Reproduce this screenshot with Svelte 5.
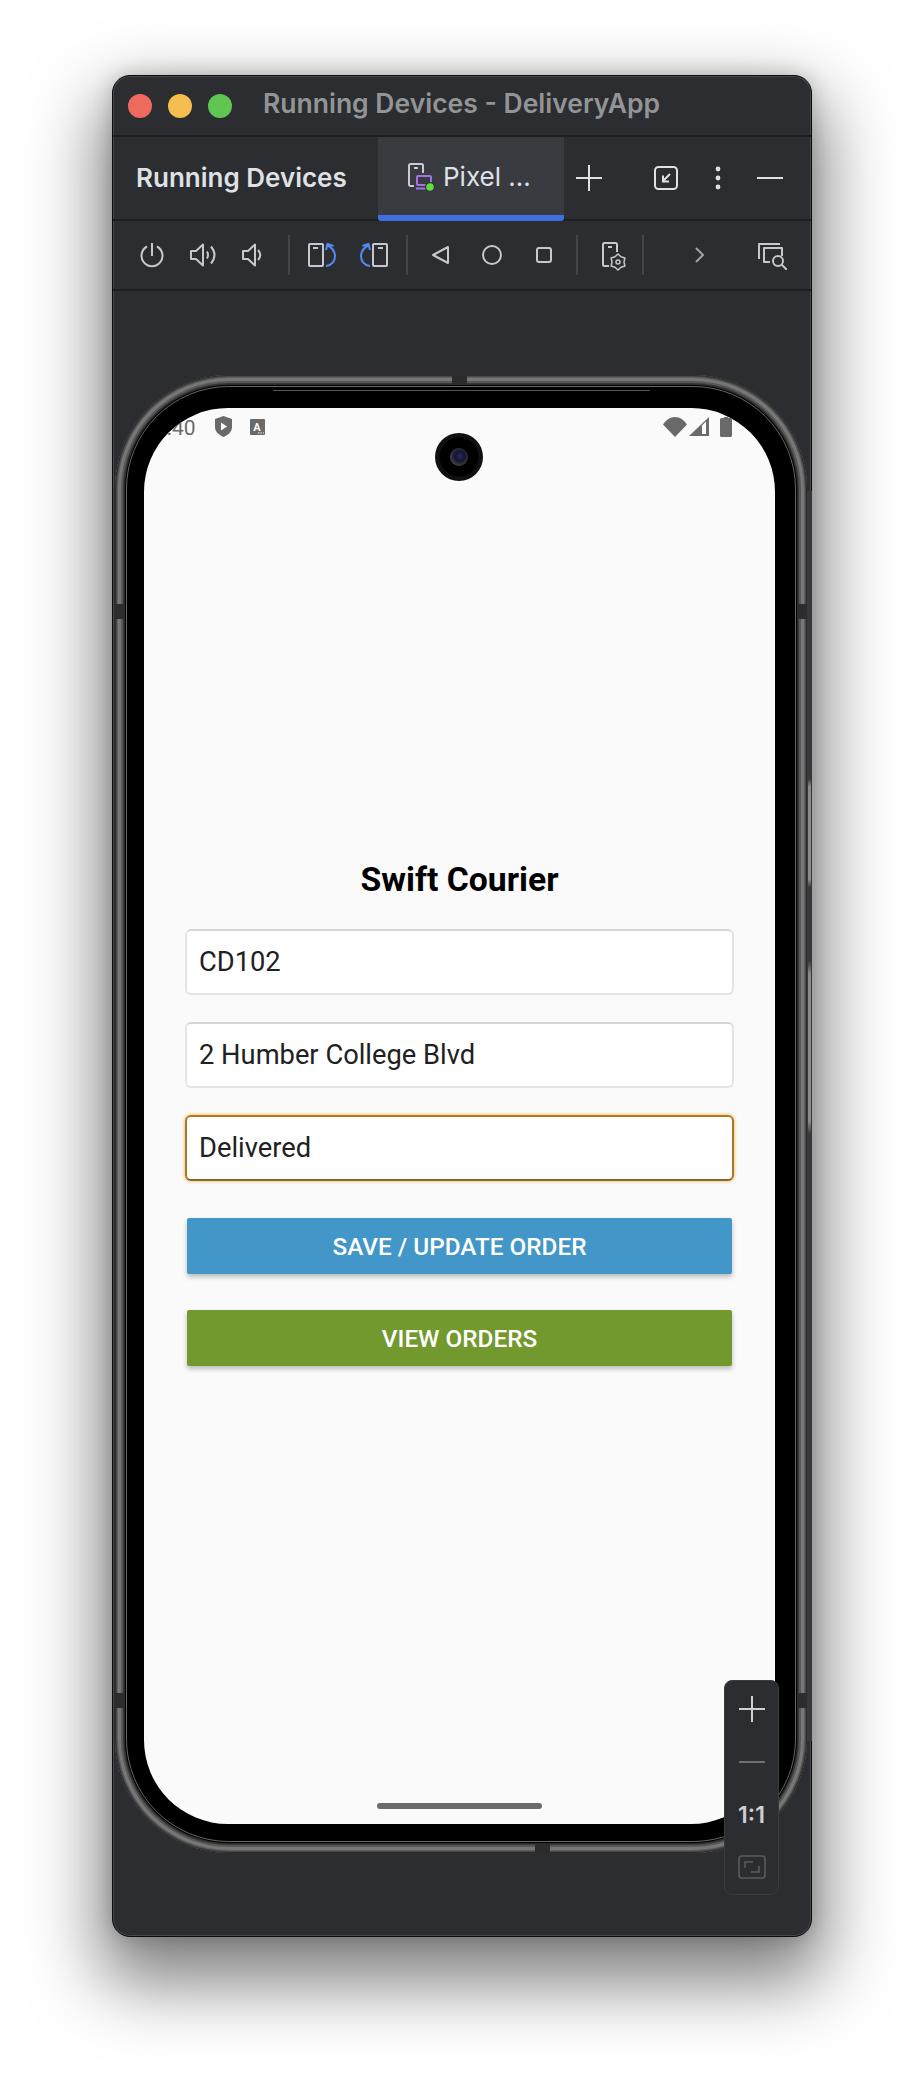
<script>
  const fields = ['CD102', '2 Humber College Blvd', 'Delivered'];
  const gear = Array.from({ length: 12 }, (_, i) => {
    const a = (i * Math.PI) / 6;
    const r = i % 2 ? 6 : 8;
    return (i ? 'L' : 'M') + (16 + r * Math.sin(a)).toFixed(1) + ' ' + (20 - r * Math.cos(a)).toFixed(1);
  }).join('') + 'Z';
</script>

<div class="page">
<div class="win">
  <header class="title">
    <div class="lights"><i class="r"></i><i class="y"></i><i class="g"></i></div>
    <span>Running Devices - DeliveryApp</span>
  </header>
  <div class="tabs">
    <strong>Running Devices</strong>
    <div class="tab">
      <svg width="30" height="30" viewBox="0 0 30 30" fill="none">
        <path d="M6 25H2.500A1.500 1.500 0 0 1 1 23.500V4.500A1.500 1.500 0 0 1 2.500 3h11A1.500 1.500 0 0 1 15 4.500V12" stroke="#c9cbd0" stroke-width="2"/>
        <path d="M6 7h4" stroke="#c9cbd0" stroke-width="2"/>
        <rect x="9" y="15" width="14" height="9" rx="1" stroke="#a571e6" stroke-width="2"/>
        <path d="M8 27.500h11" stroke="#a571e6" stroke-width="2"/>
        <circle cx="22" cy="26" r="5" fill="#25352a"/>
        <circle cx="22" cy="26" r="3.800" fill="#5fe03a"/>
      </svg>
      <span>Pixel ...</span>
    </div>
    <svg class="t plus" width="26" height="26" viewBox="0 0 26 26"><path d="M13 0v26M0 13h26" stroke="#dfe1e5" stroke-width="2"/></svg>
    <svg class="t shrink" width="24" height="24" viewBox="0 0 24 24" fill="none"><rect x="1" y="1" width="22" height="22" rx="3.500" stroke="#dfe1e5" stroke-width="2"/><path d="M16 8l-7 7M9 9.500V15.500H15" stroke="#dfe1e5" stroke-width="2"/></svg>
    <svg class="t dots" width="6" height="24" viewBox="0 0 6 24"><circle cx="3" cy="3" r="2.400" fill="#dfe1e5"/><circle cx="3" cy="12" r="2.400" fill="#dfe1e5"/><circle cx="3" cy="21" r="2.400" fill="#dfe1e5"/></svg>
    <svg class="t dash" width="26" height="4" viewBox="0 0 26 4"><path d="M0 2h26" stroke="#dfe1e5" stroke-width="2"/></svg>
  </div>
  <div class="tools">
    <svg class="a pw" width="24" height="25" viewBox="0 0 24 25"><path d="M12 0v13M7 3.500a10.500 10.500 0 1 0 10 0"/></svg>
    <svg class="a vu" width="27" height="24" viewBox="0 0 27 24"><path d="M1 8h5l7-6.500v21L6 16H1zM17 8.500q2 3.500 0 7M21 3.500q7 8.500 0 17"/></svg>
    <svg class="a vd" width="21" height="24" viewBox="0 0 21 24"><path d="M1 8h5l7-6.500v21L6 16H1zM16 7q4.500 5 0 10"/></svg>
    <i class="sep s1"></i>
    <svg class="a rl" width="28" height="24" viewBox="0 0 28 24"><rect x="1" y="1" width="14" height="22" rx="1"/><path d="M5 5h5"/><path class="b" d="M19 2C25 5 27 9 27 13c0 5-3 9-9 10M18 7l1.500-6 6 2"/></svg>
    <svg class="a rr" width="28" height="24" viewBox="0 0 28 24"><rect x="13" y="1" width="14" height="22" rx="1"/><path d="M18 5h5"/><path class="b" d="M9 2C3 5 1 9 1 13c0 5 3 9 9 10M10 7L8.500 1l-6 2"/></svg>
    <i class="sep s2"></i>
    <svg class="a bk" width="17" height="18" viewBox="0 0 17 18"><path d="M16 1v16L1 9z"/></svg>
    <svg class="a ho" width="20" height="20" viewBox="0 0 20 20"><circle cx="10" cy="10" r="9"/></svg>
    <svg class="a sq" width="16" height="16" viewBox="0 0 16 16"><rect x="1" y="1" width="14" height="14" rx="2"/></svg>
    <i class="sep s3"></i>
    <svg class="a st" width="24" height="29" viewBox="0 0 24 29"><path d="M7 24H2.500A1.500 1.500 0 0 1 1 22.500v-20A1.500 1.500 0 0 1 2.500 1h11A1.500 1.500 0 0 1 15 2.500V10"/><path d="M6 5h4"/><path class="g1" d={gear}/><circle class="g1" cx="16" cy="20" r="2"/></svg>
    <i class="sep s4"></i>
    <svg class="a ch" width="9" height="16" viewBox="0 0 9 16"><path d="M1 1l7 7-7 7"/></svg>
    <svg class="a se" width="29" height="27" viewBox="0 0 29 27"><path d="M1 16V1h21"/><path d="M12 19H6V5h18v8"/><circle cx="20" cy="18" r="5"/><path d="M24 22l5 5"/></svg>
  </div>

  <div class="canvas">
    <div class="phone">
      <i class="nick top"></i><i class="nick bot"></i>
      <i class="band l1"></i><i class="band r1"></i><i class="band l2"></i><i class="band r2"></i>
      <i class="strip"></i><i class="key k1"></i><i class="key k2"></i>
      <div class="rim">
        <div class="screen">
          <div class="status">
            <span class="time">6:40</span>
            <svg class="shield" width="17" height="21" viewBox="0 0 17 21"><path d="M8.500 0L17 3v8c0 5-4 8-8.500 10C4 19 0 16 0 11V3z" fill="#6a6a6a"/><path d="M6 6.500l6 4-6 4z" fill="#fafafa"/></svg>
            <svg class="abox" width="15" height="16" viewBox="0 0 15 16"><rect width="15" height="16" rx="1" fill="#6a6a6a"/><text x="7" y="11.500" text-anchor="middle">A</text><path d="M8 14h1.500M10.500 14H12M13 14h1" stroke="#fafafa" stroke-width="1"/></svg>
            <div class="grow"></div>
            <svg class="wifi" width="24" height="20" viewBox="0 0 24 20"><path d="M0 7.500C3 3 7 0 12 0s9 3 12 7.500L12 20z" fill="#6a6a6a"/></svg>
            <svg class="sig" width="20" height="19" viewBox="0 0 20 19"><path d="M20 0v19H0z" fill="#6a6a6a"/><path d="M13 8.500l4-4V17h-4z" fill="#fafafa"/></svg>
            <svg class="bat" width="12" height="20" viewBox="0 0 12 20"><path d="M1.500 1H4V0h4v1h2.500A1.500 1.500 0 0 1 12 2.500v16a1.500 1.500 0 0 1-1.500 1.500h-9A1.500 1.500 0 0 1 0 18.500v-16A1.500 1.500 0 0 1 1.500 1z" fill="#6a6a6a"/></svg>
          </div>
          <main class="form">
            <h1>Swift Courier</h1>
            {#each fields as f, i}
              <div class="field" class:focus={i === 2}>{f}</div>
            {/each}
            <button class="save">SAVE / UPDATE ORDER</button>
            <button class="view">VIEW ORDERS</button>
          </main>
          <i class="home"></i>
        </div>
      </div>
      <i class="lip"></i>
      <div class="cam"><i></i></div>
    </div>
    <aside class="zoom">
      <svg width="26" height="26" viewBox="0 0 26 26"><path d="M13 0v26M0 13h26" stroke="#ced0d6" stroke-width="2"/></svg>
      <svg class="m" width="26" height="2" viewBox="0 0 26 2"><path d="M0 1h26" stroke="#6f7176" stroke-width="2"/></svg>
      <b>1:1</b>
      <svg class="fit" width="28" height="24" viewBox="0 0 28 24" fill="none"><rect x="1" y="1" width="26" height="22" rx="3" stroke="#5a5d63" stroke-width="1.500"/><path d="M7 13V7h8M21 11v6h-8" stroke="#5a5d63" stroke-width="1.500"/></svg>
    </aside>
  </div>
</div>
</div>

<style>
  :global(body) { margin: 0; background: #fff; }
  i { display: block; }
  .page {
    box-sizing: border-box;
    height: 2084px;
    padding: 75px 0 0 112px;
    overflow: hidden;
    background: #fff;
  }
  .win {
    position: relative;
    box-sizing: border-box;
    width: 700px;
    height: 1862px;
    background: #2b2d30;
    border: 1px solid #0c0c0d;
    border-radius: 18px;
    box-shadow: inset 0 0 0 1px #47494d, 0 34px 70px 12px rgba(0, 0, 0, .5), 0 0 20px rgba(0, 0, 0, .2);
    font-family: Inter, sans-serif;
  }
  .title {
    height: 59px;
    display: flex;
    align-items: center;
    border-bottom: 2px solid #1e1f22;
    color: #939496;
    font-size: 26.500px;
    font-weight: 600;
  }
  .title span { padding-bottom: 5px; }
  .lights { display: flex; gap: 16px; margin: 0 31px 0 15px; }
  .lights i { width: 24px; height: 24px; border-radius: 50%; }
  .r { background: #ee6a5e; }
  .y { background: #f5bf4f; }
  .g { background: #61c554; }
  .tabs {
    height: 82px;
    display: flex;
    align-items: center;
    border-bottom: 2px solid #1e1f22;
    color: #dfe1e5;
  }
  .tabs strong { flex: none; width: 265px; padding: 0 0 2px 23px; box-sizing: border-box; font-size: 26px; font-weight: 600; color: #dfe1e5; }
  .tab {
    flex: none;
    width: 186px;
    height: 84px;
    margin-bottom: -2px;
    box-sizing: border-box;
    background: #393b40;
    border-bottom: 6px solid #3f6fe0;
    border-radius: 0 0 3px 3px;
    display: flex;
    align-items: center;
    padding-left: 30px;
    gap: 5px;
    font-size: 26px;
  }
  .t { flex: none; }
  .plus { margin-left: 12px; }
  .shrink { margin-left: 52px; }
  .dots { margin-left: 37px; }
  .dash { margin-left: 36px; }
  .tools {
    height: 68px;
    display: flex;
    align-items: center;
    border-bottom: 2px solid #1e1f22;
  }
  .a { flex: none; fill: none; stroke: #c6c8cd; stroke-width: 2; stroke-linejoin: round; }
  .a .b { stroke: #548af7; }
  .a .g1 { stroke-width: 1.500; }
  .ch { stroke: #a0a2a6; }
  .pw { margin-left: 27px; }
  .vu { margin-left: 26px; }
  .vd { margin-left: 25px; }
  .s1 { margin-left: 25px; }
  .rl { margin-left: 18px; }
  .rr { margin-left: 24px; }
  .s2 { margin-left: 18px; }
  .bk { margin-left: 24px; }
  .ho { margin-left: 33px; }
  .sq { margin-left: 34px; }
  .s3 { margin-left: 24px; }
  .st { margin-left: 24px; margin-top: 3px; }
  .s4 { margin-left: 16px; }
  .ch { margin-left: 51px; }
  .se { margin-left: 54px; margin-top: 2px; }
  .sep { width: 2px; height: 40px; background: #43454a; flex: none; }
  .canvas { padding: 84px 0 0 2px; }
  .phone {
    position: relative;
    box-sizing: border-box;
    width: 692px;
    height: 1478px;
    border-radius: 114px;
    background: #2a2a2a;
    padding: 10px;
    box-shadow: inset 0 0 0 1px #2c2c2c, inset 0 0 0 2px #4a4a4a, inset 0 0 0 3px #5e5e5e, inset 0 0 0 6px #777, inset 0 0 0 8px #575757, inset 0 0 0 9px #383838;
  }
  .rim {
    box-sizing: border-box;
    height: 100%;
    background: #000;
    border-radius: 104px;
    padding: 23px 22px 19px 19px;
    outline: 1px solid #666;
    outline-offset: -2px;
  }
  .screen {
    position: relative;
    height: 100%;
    background: #fafafa;
    border-radius: 84px;
    overflow: hidden;
    display: flex;
    flex-direction: column;
    font-family: Roboto, sans-serif;
  }
  .status { height: 37px; padding: 0 43px 0 11px; display: flex; align-items: center; flex: none; color: #6a6a6a; font-size: 21px; }
  .time { width: 60px; flex: none; padding-top: 3px; white-space: nowrap; }
  .abox { margin-left: 18px; }
  .abox text { fill: #fafafa; font: 700 11px Roboto, sans-serif; }
  .grow { flex: 1; }
  .sig { margin-left: 2px; }
  .bat { margin-left: 11px; }
  .form { padding: 0 41px; margin-top: 415px; display: flex; flex-direction: column; }
  h1 { margin: 0 0 29px; text-align: center; font-size: 33.700px; font-weight: 700; line-height: 40px; color: #000; }
  .field {
    box-sizing: border-box;
    height: 66px;
    margin-bottom: 27px;
    padding-left: 12px;
    display: flex;
    align-items: center;
    background: #fff;
    border: 2px solid #e4e4e4;
    border-top-color: #d6d6d6;
    border-radius: 6px;
    color: #212121;
    font-size: 27.300px;
  }
  .field.focus { margin-bottom: 37px; border-color: #b27a20 #a8782a #86652f; box-shadow: 0 0 3px 1px rgba(243, 187, 80, .7); }
  button {
    display: block;
    height: 56px;
    margin: 0 2px 36px;
    padding: 0;
    border: 0;
    border-radius: 2px;
    color: #fff;
    font: 500 24.300px Roboto, sans-serif;
    box-shadow: 0 3px 5px rgba(0, 0, 0, .25);
  }
  .save { background: #4296c8; }
  .view { background: #71992d; }
  .home { position: absolute; left: 233px; bottom: 15px; width: 165px; height: 6px; border-radius: 3px; background: #6b6b6b; }
  .cam { position: absolute; left: 320px; top: 58px; width: 48px; height: 48px; border-radius: 50%; background: radial-gradient(circle, #000 55%, #111 60%, #0b0b0b 100%); display: flex; align-items: center; justify-content: center; }
  .cam i { width: 18px; height: 18px; border-radius: 50%; background: radial-gradient(circle at 55% 45%, #2a2a6e 0, #14142e 35%, #3a3a40 65%, #55585c 85%, #1a1a1a 100%); }
  .lip { position: absolute; left: 158px; top: 12px; width: 377px; height: 3px; background: #000; border-bottom: 1px solid #555; }
  .nick { position: absolute; background: #2b2b2b; }
  .nick.top { left: 337px; top: 0; width: 15px; height: 10px; }
  .nick.bot { left: 420px; bottom: 0; width: 15px; height: 10px; }
  .band { position: absolute; width: 10px; height: 15px; background: #2d2d2d; }
  .l1 { left: 0; top: 229px; } .r1 { right: 0; top: 229px; }
  .l2 { left: 0; top: 1318px; } .r2 { right: 0; top: 1318px; }
  .strip { position: absolute; left: 692px; top: 116px; width: 5px; height: 1250px; background: #38393c; }
  .key { position: absolute; left: 693px; width: 3px; background: linear-gradient(#333, #8a8a8a 8%, #8a8a8a 92%, #333); }
  .k1 { top: 403px; height: 110px; }
  .k2 { top: 585px; height: 175px; }
  .zoom {
    position: absolute;
    left: 611px;
    top: 1604px;
    box-sizing: border-box;
    width: 55px;
    height: 215px;
    background: #2b2d30;
    border: 1px solid #393b40;
    border-radius: 8px;
    display: flex;
    flex-direction: column;
    align-items: center;
    padding-top: 15px;
    color: #ced0d6;
  }
  .zoom .m { margin-top: 39px; }
  .zoom b { margin-top: 38px; font-size: 23px; font-weight: 600; line-height: 28px; }
  .zoom .fit { margin-top: 26px; }
</style>
